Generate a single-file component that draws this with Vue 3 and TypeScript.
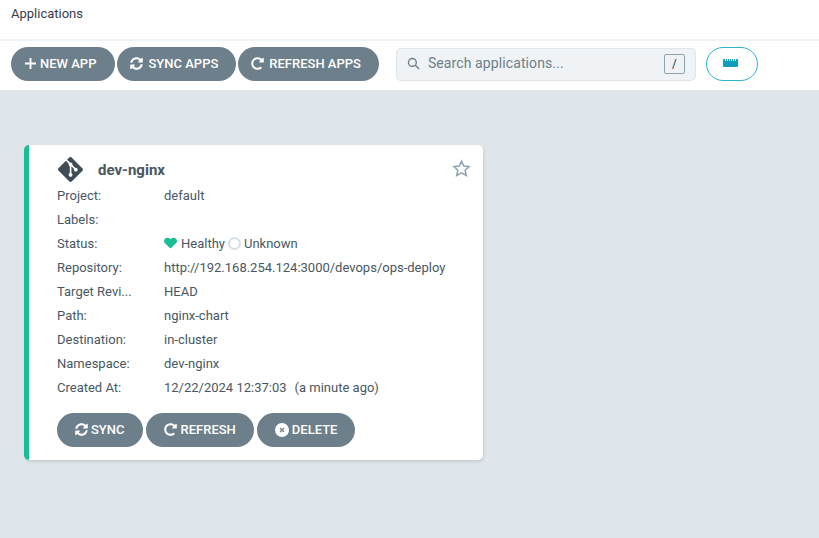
<script setup lang="ts">
const redo = 'M256.455 8c66.269.119 126.437 26.233 170.859 68.685l35.715-35.715C478.149 25.851 504 36.559 504 57.941V192c0 13.255-10.745 24-24 24H345.941c-21.382 0-32.09-25.851-16.971-40.971l41.75-41.75c-30.864-28.899-70.801-44.907-113.23-45.273-92.398-.798-170.283 73.977-169.484 169.442C88.764 348.009 162.184 424 256 424c41.127 0 79.997-14.678 110.629-41.556 4.743-4.161 11.906-3.908 16.368.553l39.662 39.662c4.872 4.872 4.631 12.815-.482 17.433C378.202 479.813 319.926 504 256 504 119.034 504 8.001 392.967 8 256.002 7.999 119.193 119.646 7.755 256.455 8z'
const sync = 'M370.72 133.28C339.458 104.008 298.888 87.962 255.848 88c-77.458.068-144.328 53.178-162.791 126.85-1.344 5.363-6.122 9.15-11.651 9.15H24.103c-7.498 0-13.194-6.807-11.807-14.176C33.933 94.924 134.813 8 256 8c66.448 0 126.791 26.136 171.315 68.685L463.03 40.97C478.149 25.851 504 36.559 504 57.941V192c0 13.255-10.745 24-24 24H345.941c-21.382 0-32.09-25.851-16.971-40.971l41.75-41.749zM32 296h134.059c21.382 0 32.09 25.851 16.971 40.971l-41.75 41.75c31.262 29.273 71.835 45.319 114.876 45.28 77.418-.07 144.315-53.144 162.787-126.849 1.344-5.363 6.122-9.15 11.651-9.15h57.304c7.498 0 13.194 6.807 11.807 14.176C478.067 417.076 377.187 504 256 504c-66.448 0-126.791-26.136-171.315-68.685L48.97 471.03C33.851 486.149 8 475.441 8 454.059V320c0-13.255 10.745-24 24-24z'
const git = 'M23.546 10.93L13.067.452c-.604-.603-1.582-.603-2.188 0L8.708 2.627l2.76 2.76c.645-.215 1.379-.07 1.889.441.516.515.658 1.258.438 1.9l2.658 2.66c.645-.223 1.387-.078 1.9.435.721.72.721 1.884 0 2.604-.719.719-1.881.719-2.6 0-.539-.541-.674-1.337-.404-1.996L12.86 8.955v6.525c.176.086.342.203.488.348.713.721.713 1.883 0 2.6-.719.721-1.889.721-2.609 0-.719-.719-.719-1.879 0-2.598.182-.18.387-.316.605-.406V8.835c-.217-.091-.424-.222-.6-.401-.545-.545-.676-1.342-.396-2.009L7.636 3.7.45 10.881c-.6.605-.6 1.584 0 2.189l10.48 10.477c.604.604 1.582.604 2.186 0l10.43-10.43c.605-.603.605-1.582 0-2.187'
const heart = 'M462.3 62.6C407.5 15.9 326 24.3 275.7 76.2L256 96.5l-19.7-20.3C186.1 24.3 104.5 15.9 49.7 62.6c-62.8 53.6-66.1 149.8-9.9 207.9l193.5 199.8c12.5 12.9 32.8 12.9 45.3 0l193.5-199.8c56.3-58.1 53-154.3-9.8-207.9z'
const rows: { label: string; value: string; note?: string }[] = [
  { label: 'Project:', value: 'default' },
  { label: 'Labels:', value: '' },
  { label: 'Status:', value: '' },
  { label: 'Repository:', value: 'http://192.168.254.124:3000/devops/ops-deploy' },
  { label: 'Target Revi...', value: 'HEAD' },
  { label: 'Path:', value: 'nginx-chart' },
  { label: 'Destination:', value: 'in-cluster' },
  { label: 'Namespace:', value: 'dev-nginx' },
  { label: 'Created At:', value: '12/22/2024 12:37:03', note: '(a minute ago)' },
]
</script>

<template>
  <div class="page">
    <header class="title">Applications</header>
    <div class="toolbar">
      <div class="actions">
        <button class="btn wide">
          <svg class="ic plus" viewBox="0 0 12 12"><path d="M5 0h2v5h5v2H7v5H5V7H0V5h5z" /></svg>NEW APP
        </button>
        <button class="btn"><svg class="ic" viewBox="0 0 512 512"><path :d="sync" /></svg>SYNC APPS</button>
        <button class="btn"><svg class="ic" viewBox="0 0 512 512"><path :d="redo" /></svg>REFRESH APPS</button>
      </div>
      <div class="search">
        <svg class="mag" viewBox="0 0 14 14"><circle cx="5.8" cy="5.8" r="4.2" /><path d="M9 9l4 4" /></svg>
        <span class="placeholder">Search applications...</span>
        <kbd class="key">/</kbd>
      </div>
      <button class="ruler">
        <svg viewBox="0 0 17 8" width="17" height="8">
          <path d="M1 0h1v2h1V0h1v2h1V0h1v2h1V0h1v2h1V0h1v2h1V0h1v2h1V0h1a1 1 0 0 1 1 1v6a1 1 0 0 1-1 1H1a1 1 0 0 1-1-1V1a1 1 0 0 1 1-1z" />
        </svg>
      </button>
    </div>
    <main class="content">
      <article class="card">
        <svg class="star" viewBox="0 0 24 24">
          <path d="M12 2.6l2.9 6.2 6.700.8-5 4.600 1.400 6.700-6-3.400-6 3.400 1.400-6.700-5-4.600 6.700-.8z" />
        </svg>
        <div class="head">
          <svg class="git" viewBox="0 0 24 24"><path :d="git" /></svg>
          <h3 class="name">dev-nginx</h3>
        </div>
        <div v-for="r in rows" :key="r.label" class="row">
          <span class="label">{{ r.label }}</span>
          <span v-if="r.label === 'Status:'" class="value status">
            <svg class="heart" viewBox="0 0 512 512" preserveAspectRatio="none"><path :d="heart" /></svg>
            <span>Healthy</span>
            <span class="ring"></span>
            <span>Unknown</span>
          </span>
          <span v-else class="value">{{ r.value }}<span v-if="r.note" class="note">{{ r.note }}</span></span>
        </div>
        <div class="card-actions">
          <button class="btn"><svg class="ic" viewBox="0 0 512 512"><path :d="sync" /></svg>SYNC</button>
          <button class="btn roomy"><svg class="ic" viewBox="0 0 512 512"><path :d="redo" /></svg>REFRESH</button>
          <button class="btn">
            <svg class="ic big" viewBox="0 0 14 14"><circle cx="7" cy="7" r="7" fill="#fff" /><path d="M5 5l4 4M9 5l-4 4" stroke="#6d7f8b" stroke-width="1.200" fill="none" /></svg>DELETE
          </button>
        </div>
      </article>
    </main>
  </div>
</template>

<style scoped>
.page {
  width: 819px;
  height: 538px;
  overflow: hidden;
  background: #dee6eb;
  font-family: Roboto, "Liberation Sans", sans-serif;
  color: #495763;
  display: flex;
  flex-direction: column;
}
.title {
  height: 39px;
  box-sizing: border-box;
  background: #fff;
  padding: 6px 0 0 11px;
  font-size: 13px;
  line-height: 16px;
  color: #363c4a;
}
.toolbar {
  height: 51px;
  box-sizing: border-box;
  background: #fff;
  border-top: 2px solid #eff3f5;
  padding-top: 6px;
  padding-left: 11px;
  display: flex;
  align-items: flex-start;
}
.actions {
  display: flex;
  gap: 2px;
}
.btn {
  height: 34px;
  padding: 0 18px 0 13px;
  border: 0;
  border-radius: 17px;
  background: #6d7f8b;
  color: #fff;
  font: 500 13px/34px Roboto, sans-serif;
  display: inline-flex;
  align-items: center;
  gap: 5px;
  white-space: nowrap;
}
.btn.wide {
  padding-right: 19px;
}
.ic {
  width: 13px;
  height: 13px;
  margin-bottom: 2px;
  fill: #fff;
  flex: none;
}
.plus {
  width: 11px;
  height: 11px;
  margin-left: 1px;
  margin-right: -1px;
  margin-bottom: 1px;
}
.big {
  width: 14px;
  height: 14px;
  margin-bottom: 0;
}
.search {
  margin-left: 17px;
  margin-top: 1px;
  width: 300px;
  height: 33px;
  box-sizing: border-box;
  background: #eff3f5;
  border: 1px solid #dee6eb;
  border-radius: 5px;
  display: flex;
  align-items: center;
  padding: 0 10px 2px;
}
.mag {
  width: 13px;
  height: 13px;
  fill: none;
  stroke: #6d7f8b;
  stroke-width: 1.500;
  flex: none;
}
.placeholder {
  margin-left: 8px;
  margin-bottom: 2px;
  flex: 1;
  font-size: 14px;
  letter-spacing: 0.1px;
  color: #6d7f8b;
}
.key {
  width: 21px;
  height: 20px;
  box-sizing: border-box;
  border: 1px solid #8fa4b1;
  border-radius: 2px;
  font: 500 12px/18px Roboto, sans-serif;
  color: #495763;
  text-align: center;
}
.ruler {
  margin-left: 10px;
  width: 52px;
  height: 34px;
  padding: 0 0 2px;
  box-sizing: border-box;
  background: #fff;
  border: 1px solid #2db5cf;
  border-radius: 17px;
  display: flex;
  align-items: center;
  justify-content: center;
}
.ruler svg {
  fill: #0f9fbb;
}
.content {
  flex: 1;
  padding: 55px 0 0 24px;
}
.card {
  position: relative;
  width: 459px;
  height: 315px;
  box-sizing: border-box;
  background: #fff;
  border-left: 5px solid #18be94;
  border-radius: 5px;
  box-shadow: 1px 2px 3px rgba(0, 0, 0, 0.1);
  padding: 11px 0 0 28px;
}
.star {
  position: absolute;
  top: 14px;
  right: 12px;
  width: 19px;
  height: 19px;
  fill: none;
  stroke: #8fa4b1;
  stroke-width: 2;
}
.head {
  height: 27px;
  display: flex;
  align-items: center;
}
.git {
  width: 25px;
  height: 25px;
  margin-left: 1px;
  fill: #3f4b55;
  flex: none;
}
.name {
  margin: 0 0 0 15px;
  font-size: 15px;
  font-weight: 700;
  color: #495763;
}
.row {
  height: 24px;
  display: flex;
  align-items: center;
  font-size: 13px;
}
.label {
  width: 107px;
  flex: none;
}
.value {
  white-space: pre;
}
.note {
  margin-left: 8px;
}
.status {
  display: flex;
  align-items: center;
}
.heart {
  width: 13px;
  height: 12px;
  fill: #18be94;
  margin-right: 4px;
}
.ring {
  width: 13px;
  height: 13px;
  box-sizing: border-box;
  border: 2px solid #d5dfe5;
  border-radius: 50%;
  margin: 0 3px;
}
.card-actions {
  display: flex;
  gap: 3px;
  margin-top: 14px;
}
.card-actions .btn {
  padding: 0 18px;
  gap: 3px;
}
.card-actions .btn.roomy {
  gap: 4px;
}
</style>
